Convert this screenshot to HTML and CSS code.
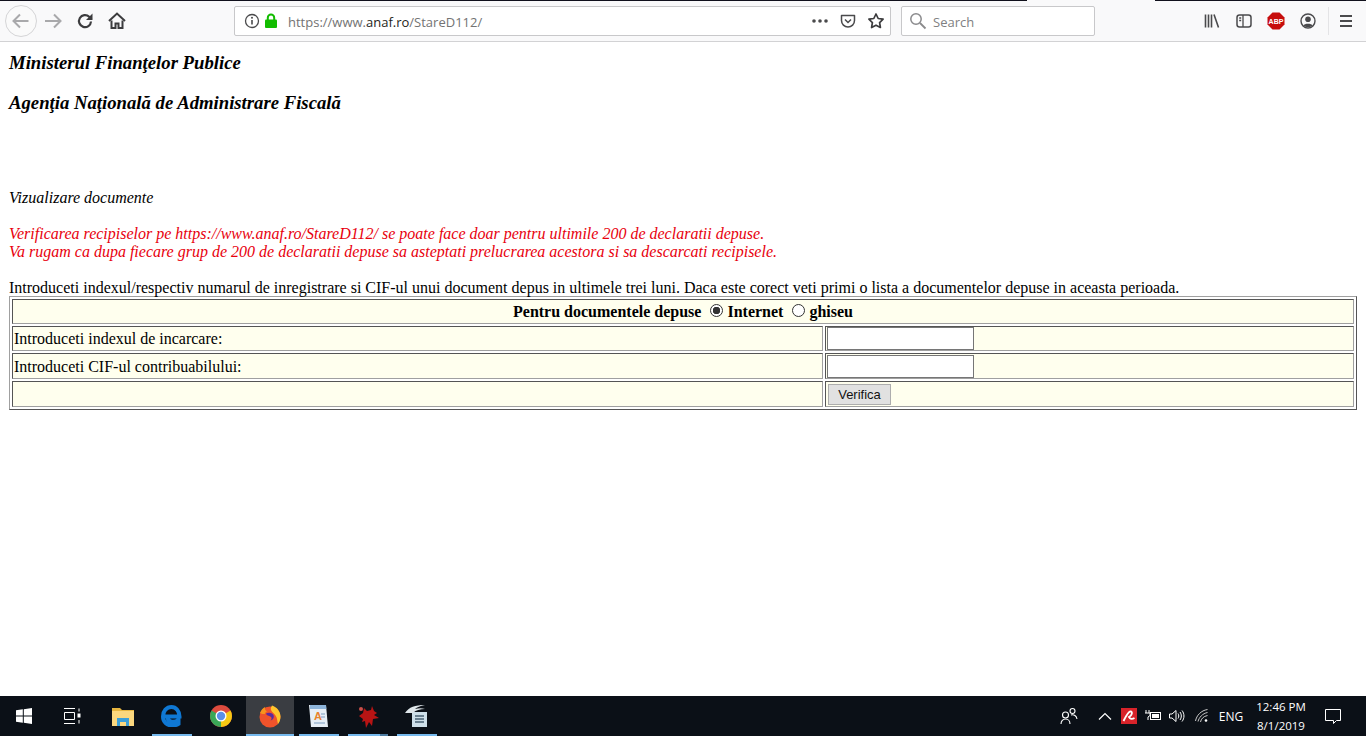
FILE: index.html
```html
<!DOCTYPE html>
<html>

<head>
    <title>Vizualizare documente</title>
    <link rel="stylesheet" href="styles.css">
</head>

<body>
    <div class="screen">
        <div class="toolbar">
            <div class="topline">
                <div class="dark grow"></div>
                <div class="gap"></div>
                <div class="dark tail"></div>
            </div>
            <div class="navrow">
                <div class="tool backbtn">
                    <svg width="32" height="32" viewBox="0 0 32 32">
                        <circle cx="16" cy="16" r="15.5" fill="#fafafa" stroke="#d4d4d6" />
                        <path d="M23.5 16H9M15 9.5 8.5 16l6.5 6.5" fill="none" stroke="#a9a9ab" stroke-width="2" />
                    </svg>
                </div>
                <div class="tool">
                    <svg width="20" height="20" viewBox="0 0 20 20">
                        <path d="M2 10h15M11 3.5l6.5 6.5L11 16.500" fill="none" stroke="#a9a9ab" stroke-width="2" />
                    </svg>
                </div>
                <div class="tool">
                    <svg width="18" height="18" viewBox="0 0 18 18">
                        <path d="M15 9.500A6 6 0 1 1 13.200 4.800L15.500 7" fill="none" stroke="#3c3c3e" stroke-width="2.200" />
                        <path d="M16.500 1.500v6.500h-6.500z" fill="#3c3c3e" />
                    </svg>
                </div>
                <div class="tool">
                    <svg width="18" height="18" viewBox="0 0 18 18">
                        <path d="M1 9 9 1.500 17 9" fill="none" stroke="#3c3c3e" stroke-width="2" />
                        <path d="M3.500 8.500V16h4v-4.500h3V16h4V8.500" fill="none" stroke="#3c3c3e" stroke-width="2" />
                    </svg>
                </div>

                <div class="urlbar">
                    <svg class="url-info" width="16" height="16" viewBox="0 0 16 16">
                        <circle cx="8" cy="8" r="6.500" fill="none" stroke="#4a4a4c" stroke-width="1.300" />
                        <path d="M8 7v4.500" stroke="#4a4a4c" stroke-width="1.600" />
                        <circle cx="8" cy="4.800" r="1" fill="#4a4a4c" />
                    </svg>
                    <svg class="url-lock" width="14" height="16" viewBox="0 0 14 16">
                        <path d="M3.800 7V4.800a3.200 3.200 0 0 1 6.400 0V7" fill="none" stroke="#12bc00" stroke-width="2" />
                        <rect x="1" y="6.500" width="12" height="8.500" rx="1" fill="#12bc00" />
                    </svg>
                    <div class="url-text">https://www.<span class="url-host">anaf.ro</span>/StareD112/</div>
                    <svg class="url-dots" width="16" height="4" viewBox="0 0 16 4">
                        <circle cx="2" cy="2" r="1.800" fill="#4a4a4c" />
                        <circle cx="8" cy="2" r="1.800" fill="#4a4a4c" />
                        <circle cx="14" cy="2" r="1.800" fill="#4a4a4c" />
                    </svg>
                    <svg class="url-pocket" width="16" height="16" viewBox="0 0 16 16">
                        <path d="M1.500 2.500h13v5a6.500 6.500 0 0 1-13 0z" fill="none" stroke="#4a4a4c" stroke-width="1.500" stroke-linejoin="round" />
                        <path d="M5 6.500l3 3 3-3" fill="none" stroke="#4a4a4c" stroke-width="1.500" />
                    </svg>
                    <svg class="url-star" width="18" height="18" viewBox="0 0 18 18">
                        <path d="M9 2l2.200 4.500 4.900.7-3.500 3.400.8 4.900L9 13.200l-4.400 2.300.8-4.900L1.900 7.200l4.900-.7z" fill="none" stroke="#3c3c3e" stroke-width="1.700" stroke-linejoin="round" />
                    </svg>
                </div>

                <div class="searchbar">
                    <svg width="18" height="18" viewBox="0 0 18 18">
                        <circle cx="7" cy="7" r="5.200" fill="none" stroke="#8a8a8c" stroke-width="1.500" />
                        <path d="M11 11l5.500 5.500" stroke="#8a8a8c" stroke-width="1.800" />
                    </svg>
                    <span class="search-text">Search</span>
                </div>

                <div class="tools-right">
                    <div class="tool">
                        <svg width="16" height="16" viewBox="0 0 16 16">
                            <path d="M1.500 1.500v13M4.500 1.500v13M7.500 1.500v13M10 1.500l4.500 13" fill="none" stroke="#4a4a4c" stroke-width="1.600" />
                        </svg>
                    </div>
                    <div class="tool">
                        <svg width="16" height="16" viewBox="0 0 16 16">
                            <rect x="1" y="2" width="14" height="12" rx="2.500" fill="none" stroke="#4a4a4c" stroke-width="1.500" />
                            <path d="M7 2v12M3.200 5h2M3.200 7.500h2" fill="none" stroke="#4a4a4c" stroke-width="1.300" />
                        </svg>
                    </div>
                    <div class="tool">
                        <svg width="18" height="18" viewBox="0 0 18 18">
                            <path d="M5.500 .5h7L17.500 5.500v7L12.500 17.500h-7L.5 12.500v-7z" fill="#c70d0c" />
                            <text x="9" y="11.500" class="abp">ABP</text>
                        </svg>
                    </div>
                    <div class="tool">
                        <svg width="16" height="16" viewBox="0 0 16 16">
                            <circle cx="8" cy="8" r="7" fill="none" stroke="#4a4a4c" stroke-width="1.400" />
                            <circle cx="8" cy="6.300" r="2.800" fill="#4a4a4c" />
                            <path d="M3.300 12.500C4.500 10.300 11.500 10.300 12.700 12.500 11 14.600 5 14.600 3.300 12.500z" fill="#4a4a4c" />
                        </svg>
                    </div>
                    <div class="sep"></div>
                    <div class="tool menu">
                        <svg width="14" height="14" viewBox="0 0 14 14">
                            <path d="M1 2h12M1 7h12M1 12h12" stroke="#4a4a4c" stroke-width="1.800" />
                        </svg>
                    </div>
                </div>
            </div>
        </div>

        <div class="page">
            <h3 class="title">Ministerul Finanţelor Publice</h3>
            <h3 class="title second">Agenţia Naţională de Administrare Fiscală</h3>

            <p class="view-label">Vizualizare documente</p>
            <p class="warning">Verificarea recipiselor pe https://www.anaf.ro/StareD112/ se poate face doar pentru ultimile 200 de declaratii depuse.<br>Va rugam ca dupa fiecare grup de 200 de declaratii depuse sa asteptati prelucrarea acestora si sa descarcati recipisele.</p>
            <p class="intro">Introduceti indexul/respectiv numarul de inregistrare si CIF-ul unui document depus in ultimele trei luni. Daca este corect veti primi o lista a documentelor depuse in aceasta perioada.</p>

            <table class="formtable">
                <tr>
                    <th colspan="2" class="short">Pentru documentele depuse
                        <input type="radio" name="tip" class="radio" checked>Internet
                        <input type="radio" name="tip" class="radio">ghiseu
                    </th>
                </tr>
                <tr>
                    <td class="col-label short">Introduceti indexul de incarcare:</td>
                    <td class="short"><input type="text" class="field"></td>
                </tr>
                <tr>
                    <td class="col-label lower">Introduceti CIF-ul contribuabilului:</td>
                    <td><input type="text" class="field"></td>
                </tr>
                <tr>
                    <td class="col-label"></td>
                    <td><button class="verify">Verifica</button></td>
                </tr>
            </table>
        </div>

        <div class="taskbar">
            <div class="task start">
                <svg width="16" height="16" viewBox="0 0 16 16">
                    <path d="M0 2.300 6.800 1.300V7.500H0zM7.800 1.200 16 0V7.500H7.800zM0 8.500H6.800V14.700L0 13.700zM7.800 8.500H16V16L7.800 14.800z" fill="#fff" />
                </svg>
            </div>
            <div class="task">
                <svg width="18" height="16" viewBox="0 0 18 16">
                    <path d="M1 .5h11M1 15.500h11M1.500 4.500h10v7h-10zM16 .5v3M16 12v3.500" fill="none" stroke="#fff" />
                    <rect x="14.500" y="5.500" width="3" height="4" fill="#fff" />
                </svg>
            </div>
            <div class="task explorer">
                <svg width="22" height="20" viewBox="0 0 22 20">
                    <path d="M0 2h8l2 2h12v4H0z" fill="#e7b640" />
                    <path d="M0 5h22v15H0z" fill="#fbd77e" />
                    <path d="M5 20v-8h12v8h-3v-4H8v4z" fill="#3c9fd8" />
                </svg>
            </div>
            <div class="task running">
                <svg width="22" height="22" viewBox="0 0 22 22">
                    <path d="M4 11.500h14.500C18.500 6 15 2 10.500 2 5.500 2 2 6 2 11.500 2 17 6 20.500 11 20.500c2.500 0 4.800-.6 6.500-1.700v-4c-1.700 1.200-3.800 1.900-5.800 1.900-3 0-5-1.500-5-4.700" fill="none" stroke="#0f78d4" stroke-width="4" />
                </svg>
            </div>
            <div class="task">
                <svg width="24" height="24" viewBox="0 0 24 24">
                    <circle cx="12" cy="12" r="11" fill="#dd4b3e" />
                    <path d="M12 12 21.500 6.500A11 11 0 0 1 12 23z" fill="#f6c913" />
                    <path d="M12 12 12 23A11 11 0 0 1 2.500 6.500z" fill="#3aa757" />
                    <circle cx="12" cy="12" r="5.500" fill="#fff" />
                    <circle cx="12" cy="12" r="4.200" fill="#5a8fe8" />
                </svg>
            </div>
            <div class="task running active">
                <svg width="24" height="24" viewBox="0 0 24 24">
                    <circle cx="12" cy="13" r="10.500" fill="#f0532b" />
                    <path d="M14 1.500c5 1.500 8.500 6 8.500 11 0 3-1 5.500-2.500 7.500-1-3-.5-6-2.500-8.500-1.500-2-3.500-3.500-4.500-5.500-.5-1.500 0-3 1-4.500z" fill="#ffc42c" />
                    <path d="M2 9c1-3 3-5 5-6-.5 2 .5 3.500 2 4.500-1.500.5-2 1.500-2 2.500-2 0-3.500 0-5-1z" fill="#f7941d" />
                    <path d="M8 9.500c2.500-1.500 6-1 7.500 1.500 1 2.500-.5 5-3 5.500 2-2 1-4-1.500-4.500-1.500-.5-2.500-1-3-2.500z" fill="#5b2b9e" />
                </svg>
            </div>
            <div class="task running">
                <svg width="20" height="24" viewBox="0 0 20 24">
                    <path d="M0 1h17l2 22H2z" fill="#e6eef6" />
                    <path d="M1 1h16l.3 4H1z" fill="#8db4da" />
                    <text x="5" y="16" class="doc-letter">A</text>
                    <path d="M12 10h4M12 13h4M5 19h11" stroke="#7a9cc0" stroke-width="1.200" />
                </svg>
            </div>
            <div class="task running stacked">
                <svg width="24" height="24" viewBox="0 0 24 24">
                    <path d="M3 12 7 9l1-5 3 3 4-1 1-4 2 5 3 2-3 2 5 3-6 1-1 7-3-4-3 6-1-7-3 1 1-3z" fill="#b81414" />
                    <circle cx="5" cy="5" r="2" fill="#c9504a" />
                </svg>
            </div>
            <div class="task running">
                <svg width="24" height="24" viewBox="0 0 24 24">
                    <path d="M7 8h15v15H7z" fill="#cfe0ea" />
                    <path d="M10 12h9M10 15h9M10 18h9" stroke="#4a6274" stroke-width="1.300" />
                    <path d="M0 9C4 3 10 1 20 1c-5 1-8 2-10 4 4-1 7-1 10 0-5 0-9 1-12 4-3 0-5 0-8 0z" fill="#dfe6ea" />
                </svg>
            </div>

            <div class="tray">
                <div class="tray-item">
                    <svg width="18" height="18" viewBox="0 0 18 18">
                        <circle cx="5.500" cy="8" r="3" fill="none" stroke="#fff" stroke-width="1.100" />
                        <path d="M1 17c0-3 2-5 4.500-5s4.500 2 4.500 5" fill="none" stroke="#fff" stroke-width="1.100" />
                        <circle cx="12.500" cy="4" r="2.500" fill="none" stroke="#fff" stroke-width="1.100" />
                        <path d="M11 8c3-.8 5.500 1 6 4" fill="none" stroke="#fff" stroke-width="1.100" />
                    </svg>
                </div>
                <div class="tray-gap"></div>
                <div class="tray-item">
                    <svg width="14" height="8" viewBox="0 0 14 8">
                        <path d="M1 7.500 7 1.500l6 6" fill="none" stroke="#fff" stroke-width="1.200" />
                    </svg>
                </div>
                <div class="tray-item">
                    <svg width="16" height="16" viewBox="0 0 16 16">
                        <rect width="16" height="16" fill="#d8232a" />
                        <path d="M2.500 13C5 8 7.500 3.500 9.500 3.500c2.500 0 1.500 4-1.500 5.500 1 2 3 2.500 5.500 1" fill="none" stroke="#fff" stroke-width="1.800" />
                    </svg>
                </div>
                <div class="tray-item">
                    <svg width="16" height="12" viewBox="0 0 16 12">
                        <path d="M1 0v3M4 0v3M0 3h5v2.500L3 7v3" fill="none" stroke="#fff" />
                        <rect x="5.500" y="2.500" width="10" height="7" fill="none" stroke="#fff" />
                        <rect x="7" y="4" width="7" height="4" fill="#fff" />
                    </svg>
                </div>
                <div class="tray-item">
                    <svg width="16" height="14" viewBox="0 0 16 14">
                        <path d="M.5 5h2.500L7 1.500v11L3 9H.5z" fill="none" stroke="#fff" />
                        <path d="M9 4.500c1 1.500 1 3.500 0 5M11 3c1.800 2.300 1.800 5.700 0 8M13 1.500c2.600 3.200 2.600 7.800 0 11" fill="none" stroke="#fff" />
                    </svg>
                </div>
                <div class="tray-item wifi">
                    <svg width="14" height="14" viewBox="0 0 14 14">
                        <path d="M.5 12C1.500 6.500 6 1.500 12.500.5M3 12.500C4 8.500 7.500 4.500 12.500 3.500M5.500 13c.5-3 3-5.800 7-6.500" fill="none" stroke="#c9c9c9" />
                        <circle cx="11" cy="11.500" r="1.300" fill="#fff" />
                    </svg>
                </div>
                <div class="tray-lang">ENG</div>
                <div class="tray-clock">
                    <div>12:46 PM</div>
                    <div>8/1/2019</div>
                </div>
                <div class="tray-note">
                    <svg width="16" height="15" viewBox="0 0 16 15">
                        <path d="M.5.500h15v11h-4L8.500 14.500V11.500H.5z" fill="none" stroke="#fff" />
                    </svg>
                </div>
            </div>
        </div>
    </div>
</body>

</html>
```

FILE: styles.css
```css
html,
body {
    margin: 0;
    padding: 0;
    height: 100%;
    overflow: hidden;
}

.screen {
    display: flex;
    flex-direction: column;
    height: 736px;
    background: white;
}

/* browser toolbar */

.toolbar {
    height: 42px;
    flex: none;
    background: #f9f9fa;
    border-bottom: 1px solid #d2d2d4;
    box-sizing: border-box;
}

.topline {
    display: flex;
    height: 1px;
}

.dark {
    background: #10101c;
}

.grow {
    flex: 1;
}

.gap {
    width: 128px;
}

.tail {
    width: 211px;
}

.navrow {
    display: flex;
    align-items: center;
    height: 40px;
    padding-left: 5px;
}

.tool {
    width: 32px;
    height: 32px;
    flex: none;
    display: flex;
    align-items: center;
    justify-content: center;
}

.urlbar {
    width: 657px;
    height: 30px;
    margin-left: 101px;
    flex: none;
    display: flex;
    align-items: center;
    box-sizing: border-box;
    background: white;
    border: 1px solid #c8c8ca;
    border-radius: 2px;
    font-family: "Open Sans", sans-serif;
    font-size: 13px;
    color: #737373;
}

.url-info {
    margin-left: 9px;
}

.url-lock {
    margin-left: 4px;
}

.url-text {
    margin: 1px 0 0 10px;
    flex: 1;
    white-space: nowrap;
}

.url-host {
    color: #1e1e20;
}

.url-dots {
    margin-right: 12px;
}

.url-pocket {
    margin-right: 11px;
}

.url-star {
    margin-right: 5px;
}

.searchbar {
    width: 194px;
    height: 30px;
    margin-left: 10px;
    flex: none;
    display: flex;
    align-items: center;
    gap: 6px;
    box-sizing: border-box;
    padding-left: 7px;
    background: white;
    border: 1px solid #c8c8ca;
    border-radius: 2px;
    font-family: "Open Sans", sans-serif;
    font-size: 13px;
    color: #808082;
}

.search-text {
    margin-top: 1px;
}

.tools-right {
    display: flex;
    align-items: center;
    margin-left: 101px;
}

.sep {
    width: 1px;
    height: 28px;
    margin-left: 4px;
    background: #e4e4e6;
}

.menu {
    margin-left: 1px;
}

.abp {
    font-family: "Liberation Sans", sans-serif;
    font-size: 7px;
    font-weight: bold;
    fill: white;
    text-anchor: middle;
}

.doc-letter {
    font-family: "Liberation Sans", sans-serif;
    font-size: 11px;
    font-weight: bold;
    fill: #e8842a;
}

/* page content */

.page {
    flex: 1;
    padding: 0 9px;
    font-family: "Liberation Serif", serif;
    font-size: 16px;
    color: black;
}

.title {
    margin: 10px 0 0;
    font-size: 18.72px;
    font-style: italic;
    line-height: 21px;
}

.second {
    margin-top: 19px;
}

.view-label {
    margin: 76px 0 0;
    font-style: italic;
    line-height: 18px;
}

.warning {
    margin: 18px 0 0;
    color: #e8000d;
    font-style: italic;
    line-height: 18px;
}

.intro {
    margin: 18px 0 0;
    line-height: 18px;
}

.formtable {
    width: 100%;
    margin-top: -1px;
    border-collapse: separate;
    border-spacing: 2px;
    border: 1px solid;
    border-color: #a0a0a0 #555 #555 #a0a0a0;
}

.formtable th,
.formtable td {
    height: 26px;
    padding: 0 1px;
    box-sizing: border-box;
    background: #ffffee;
    border: 1px solid;
    border-color: #555 #a0a0a0 #a0a0a0 #555;
}

.formtable .short {
    height: 25px;
}

.formtable .lower {
    padding-top: 1px;
}

.col-label {
    width: 811px;
}

.radio {
    appearance: none;
    width: 13px;
    height: 13px;
    margin: 0 4px 0 5px;
    vertical-align: 0;
    background: white;
    border: 1px solid #333;
    border-radius: 50%;
}

.radio:checked {
    background: radial-gradient(circle, #333 0, #333 3.5px, white 4px);
}

.field {
    display: block;
    width: 147px;
    height: 23px;
    margin: 0;
    box-sizing: border-box;
    background: white;
    border: 1px solid #767676;
}

.verify {
    display: block;
    width: 63px;
    height: 21px;
    margin: 0 0 0 1px;
    padding: 0;
    background: #e1e1e1;
    border: 1px solid #adadad;
    font-family: "Liberation Sans", sans-serif;
    font-size: 13px;
    color: #111;
}

/* windows taskbar */

.taskbar {
    height: 40px;
    flex: none;
    display: flex;
    background: #0b1017;
}

.task {
    width: 48px;
    flex: none;
    display: flex;
    align-items: center;
    justify-content: center;
}

.task + .task {
    margin-left: 1px;
}

.start + .task {
    margin-left: 0;
}

.task + .explorer {
    margin-left: 3px;
}

.running {
    background: linear-gradient(#76b9ed, #76b9ed) bottom center / 40px 2px no-repeat;
}

.active {
    background: linear-gradient(#76b9ed, #76b9ed) bottom center / 48px 2px no-repeat, #3a3d42;
}

.stacked {
    background: linear-gradient(to right, #76b9ed 32px, #4f7da3 32px) bottom center / 40px 2px no-repeat;
}

.tray {
    margin-left: auto;
    display: flex;
    padding-right: 14px;
    font-family: "Open Sans", sans-serif;
    font-size: 12px;
    color: white;
}

.tray-item {
    width: 24px;
    display: flex;
    align-items: center;
    justify-content: center;
}

.tray-gap {
    width: 12px;
}

.wifi {
    margin-left: 1px;
}

.tray-lang {
    width: 34px;
    display: flex;
    align-items: center;
    justify-content: center;
}

.tray-clock {
    width: 66px;
    display: flex;
    flex-direction: column;
    align-items: center;
    justify-content: center;
    font-size: 11.5px;
    line-height: 19px;
}

.tray-note {
    width: 38px;
    display: flex;
    align-items: center;
    justify-content: center;
}
```
